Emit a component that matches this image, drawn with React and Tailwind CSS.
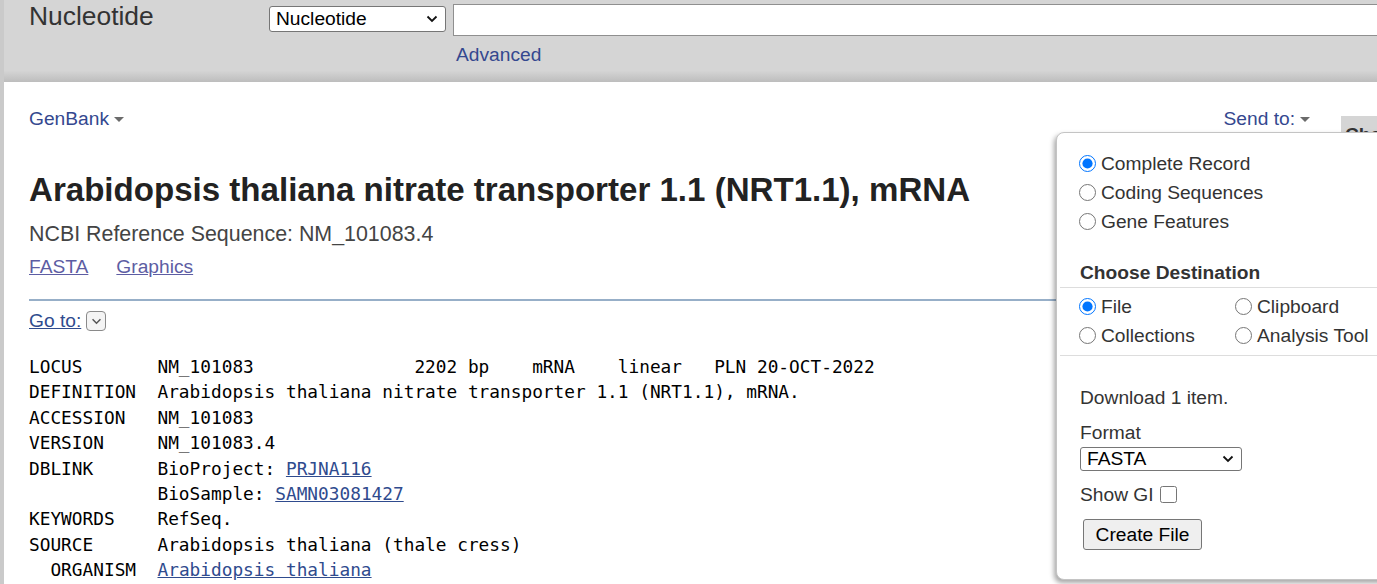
import React from "react"

const sans = "font-['Liberation_Sans',Arial,sans-serif]"

function Caret() {
    return <span className="inline-block w-0 h-0 border-x-[5px] border-x-transparent border-t-[5px] border-t-[#6b6b6b] ml-[5px] align-middle" />
}

function Chevron({ className }) {
    return (
        <svg viewBox="0 0 12 8" className={className} fill="none" stroke="#111" strokeWidth="1.8">
            <path d="M1.5 1.5 L6 6 L10.5 1.5" />
        </svg>
    )
}

function FakeSelect({ label, className }) {
    return (
        <div className={`shrink-0 flex items-center justify-between bg-white border border-[#767676] rounded-[3px] pl-[6px] pr-[7px] text-black text-[19.2px] leading-none ${className}`}>
            <span>{label}</span>
            <Chevron className="w-[12px] h-[8px]" />
        </div>
    )
}

function Radio({ checked, label }) {
    return (
        <label className="flex items-center h-[29px] text-[19.2px] text-[#333] leading-none">
            <input type="radio" readOnly checked={checked} className="w-[17px] h-[17px] m-0 mr-[5px]" />
            <span>{label}</span>
        </label>
    )
}

const link = "text-[#2f4b8e] underline"

export default function App() {
    return (
        <div className={`relative w-[1377px] h-[584px] overflow-hidden bg-[#cacaca] pl-[4px] ${sans}`}>
            {/* Header */}
            <div className="h-[82px] flex pl-[25px] bg-[linear-gradient(to_bottom,#d5d5d5_0%,#d5d5d5_86%,#bdbdbd_100%)]">
                <div className="w-[240px] shrink-0 pt-[3px] text-[26.4px] leading-none text-[#333]">Nucleotide</div>
                <FakeSelect label="Nucleotide" className="w-[177px] h-[26px] mt-[6px]" />
                <div className="ml-[7px] shrink-0 flex flex-col">
                    <div className="w-[1000px] h-[32px] mt-[4px] bg-white border border-[#8f8f8f]" />
                    <a className="mt-[9px] ml-[3px] text-[19.2px] leading-none text-[#34488f]">Advanced</a>
                </div>
            </div>

            {/* Body */}
            <div className="flex bg-white h-[502px]">
                <div className="w-[1337px] pl-[25px] pr-[31px] shrink-0">
                    <div className="flex justify-between pt-[27px] h-[47px] text-[19.2px] leading-[20px] text-[#34488f]">
                        <span className="flex items-center">GenBank<Caret /></span>
                        <span className="flex items-center">Send to:<Caret /></span>
                    </div>
                    <h1 className="mt-[41px] text-[33.1px] leading-[40px] font-bold text-[#222]">
                        Arabidopsis thaliana nitrate transporter 1.1 (NRT1.1), mRNA
                    </h1>
                    <p className="mt-[11px] text-[21.4px] leading-[26px] text-[#444]">NCBI Reference Sequence: NM_101083.4</p>
                    <div className="mt-[8px] flex gap-[28px] text-[19.2px] leading-[24px] text-[#5d5da3]">
                        <a className="underline">FASTA</a>
                        <a className="underline">Graphics</a>
                    </div>
                    <div className="mt-[20px] h-[2px] bg-[#97afc8]" />
                    <div className="mt-[8px] flex items-center h-[24px] text-[19.2px] leading-none">
                        <a className="text-[#2f4b8e] underline">Go to:</a>
                        <span className="ml-[5px] w-[20px] h-[20px] rounded-[4px] border border-[#8a8a8a] bg-[#f4f4f4] flex items-center justify-center">
                            <svg viewBox="0 0 12 8" className="w-[11px] h-[7px]" fill="none" stroke="#555" strokeWidth="1.7">
                                <path d="M1.5 1.5 L6 6 L10.5 1.5" />
                            </svg>
                        </span>
                    </div>
                    <pre className="mt-[21px] font-['DejaVu_Sans_Mono',monospace] text-[17.8px] leading-[25.4px] text-black">
{`LOCUS       NM_101083               2202 bp    mRNA    linear   PLN 20-OCT-2022
DEFINITION  Arabidopsis thaliana nitrate transporter 1.1 (NRT1.1), mRNA.
ACCESSION   NM_101083
VERSION     NM_101083.4
DBLINK      BioProject: `}<a className={link}>PRJNA116</a>{`
            BioSample: `}<a className={link}>SAMN03081427</a>{`
KEYWORDS    RefSeq.
SOURCE      Arabidopsis thaliana (thale cress)
  ORGANISM  `}<a className={link}>Arabidopsis thaliana</a>
                    </pre>
                </div>

                {/* Right column */}
                <div className="pt-[34px] flex-1 min-w-0">
                    <div className="h-[60px] bg-[#d5d5d5] pl-[4px] pt-[7px] whitespace-nowrap text-[19.2px] font-bold text-[#333] leading-[24px]">
                        Change region shown
                    </div>
                </div>
            </div>

            {/* Send to popup */}
            <div className="absolute left-[1056px] top-[132px] w-[360px] h-[448px] bg-white border border-[#c4c4c4] rounded-[8px] shadow-[-2px_3px_5px_rgba(0,0,0,0.35)] pt-[16px]">
                <div className="pl-[22px]">
                    <Radio checked label="Complete Record" />
                    <Radio label="Coding Sequences" />
                    <Radio label="Gene Features" />
                </div>
                <div className="mt-[22px] pl-[23px] h-[29px] flex items-center text-[19.2px] font-bold text-[#333] leading-none">
                    Choose Destination
                </div>
                <div className="ml-[3px] h-px bg-[#ddd]" />
                <div className="mt-[4px] pl-[22px] grid grid-cols-[156px_1fr]">
                    <Radio checked label="File" />
                    <Radio label="Clipboard" />
                    <Radio label="Collections" />
                    <Radio label="Analysis Tool" />
                </div>
                <div className="mt-[5px] ml-[3px] h-px bg-[#ddd]" />
                <div className="pl-[23px] text-[19.2px] text-[#333] leading-none">
                    <div className="mt-[27px] h-[29px] flex items-center">Download 1 item.</div>
                    <div className="mt-[6px] h-[29px] flex items-center">Format</div>
                    <FakeSelect label="FASTA" className="w-[162px] h-[24px]" />
                    <div className="mt-[9px] h-[29px] flex items-center">
                        Show GI
                        <input type="checkbox" readOnly className="ml-[6px] w-[17px] h-[17px] m-0" />
                    </div>
                    <button className="mt-[10px] ml-[3px] w-[119px] h-[31px] bg-[#efefef] border border-[#767676] rounded-[3px] text-black text-[19.2px] leading-none">
                        Create File
                    </button>
                </div>
            </div>
        </div>
    )
}
